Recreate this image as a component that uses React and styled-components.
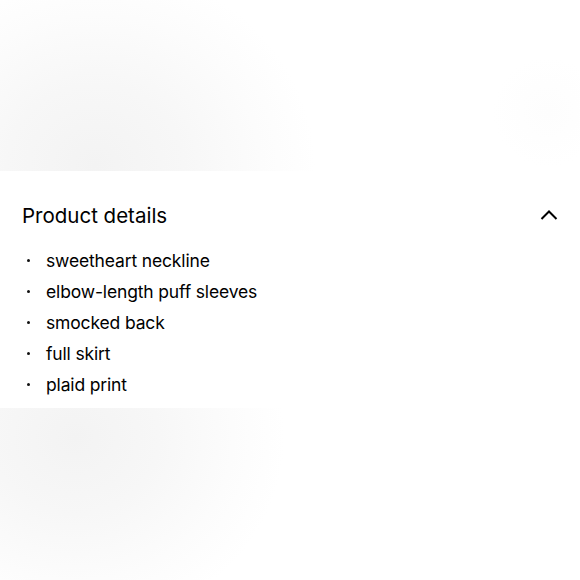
import React from 'react'
import styled, { createGlobalStyle } from 'styled-components'

const GlobalStyle = createGlobalStyle`
  html, body {
    margin: 0;
    padding: 0;
    background: #ffffff;
  }
  body {
    font-family: 'Inter', 'Noto Sans', sans-serif;
    color: #000000;
  }
`

const Page = styled.div`
  width: 580px;
  height: 580px;
  display: flex;
  flex-direction: column;
  overflow: hidden;
`

const Backdrop = styled.div`
  height: ${props => props.h}px;
  background: ${props => props.bg};
`

const Panel = styled.section`
  background: #ffffff;
  padding: 0 22px 0 22px;
  height: 237px;
  box-sizing: border-box;
`

const Header = styled.div`
  display: flex;
  align-items: center;
  justify-content: space-between;
  height: 88px;
`

const Title = styled.h2`
  margin: 0;
  font-size: 20.5px;
  font-weight: 400;
  color: #000000;
`

const Toggle = styled.button`
  border: none;
  background: none;
  padding: 0;
  display: flex;
  align-items: center;
  cursor: pointer;
`

const List = styled.ul`
  list-style: none;
  margin: -14px 0 0 0;
  padding: 0;
  display: flex;
  flex-direction: column;
`

const Item = styled.li`
  display: flex;
  align-items: center;
  height: 31px;
  font-size: 17.5px;
  color: #000000;
  letter-spacing: -0.15px;

  &::before {
    content: '';
    width: 3px;
    height: 3px;
    border-radius: 50%;
    background: #111111;
    margin: 0 16px 0 5px;
  }
`

const items = [
  'sweetheart neckline',
  'elbow-length puff sleeves',
  'smocked back',
  'full skirt',
  'plaid print'
]

const topBg = `
  radial-gradient(ellipse 220px 200px at 95px 165px, #f3f3f3 0%, #f7f7f7 40%, #fcfcfc 75%, rgba(255,255,255,0) 100%),
  radial-gradient(circle 55px at 548px 112px, #fdfdfd 0%, rgba(255,255,255,0) 100%),
  #ffffff
`

const bottomBg = `
  radial-gradient(ellipse 210px 190px at 75px 30px, #f3f3f3 0%, #f7f7f7 40%, #fcfcfc 75%, rgba(255,255,255,0) 100%),
  #ffffff
`

const App = () => {
  return (
    <>
      <GlobalStyle />
      <Page>
        <Backdrop h={171} bg={topBg} />
        <Panel>
          <Header>
            <Title>Product details</Title>
            <Toggle aria-label="Collapse">
              <svg width="18" height="12" viewBox="0 0 18 12" fill="none">
                <path d="M1.5 10L9 2.5L16.5 10" stroke="#000" strokeWidth="2" />
              </svg>
            </Toggle>
          </Header>
          <List>
            {items.map(t => <Item key={t}>{t}</Item>)}
          </List>
        </Panel>
        <Backdrop h={172} bg={bottomBg} />
      </Page>
    </>
  )
}

export default App
